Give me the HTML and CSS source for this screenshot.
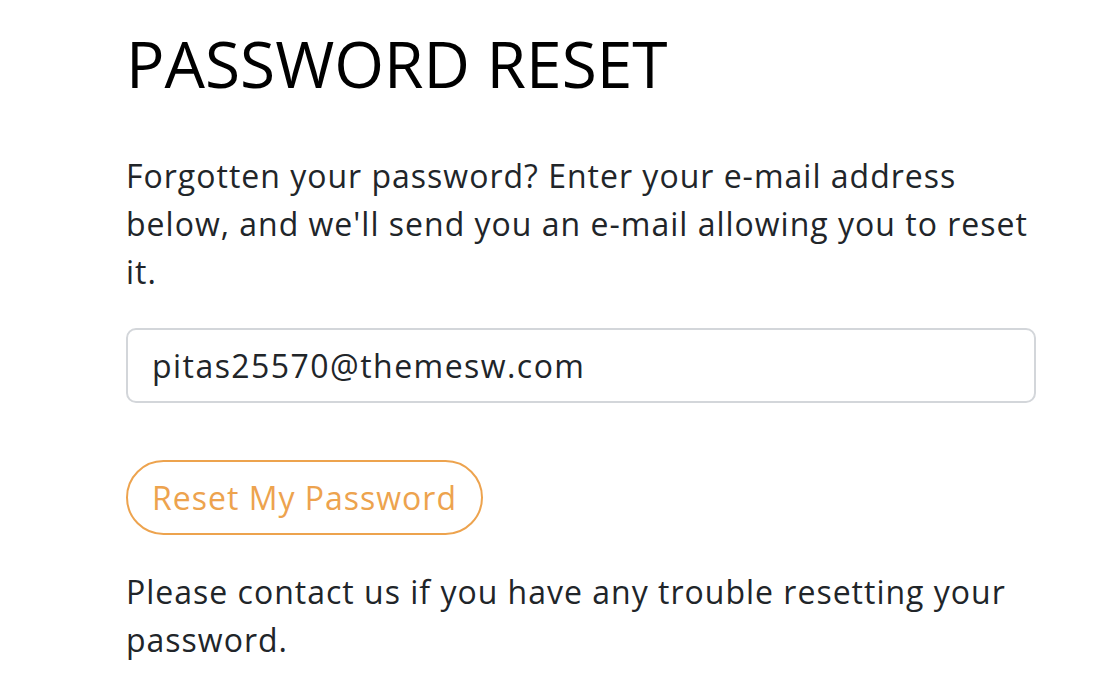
FILE: index.html
```html
<!DOCTYPE html>
<html lang="en">
<head>
<meta charset="utf-8">
<title>Password Reset</title>
<link rel="stylesheet" href="styles.css">
</head>
<body>
<main class="page">
  <h1 class="title">PASSWORD RESET</h1>
  <p class="lead">Forgotten your password? Enter your e-mail address below, and we'll send you an e-mail allowing you to reset it.</p>
  <form class="reset-form" action="#" onsubmit="return false">
    <input class="email-input" type="email" name="email" value="pitas25570@themesw.com" aria-label="E-mail address">
    <button class="reset-btn" type="submit">Reset My Password</button>
  </form>
  <p class="note">Please contact us if you have any trouble resetting your password.</p>
</main>
</body>
</html>
```
FILE: styles.css
```css
html, body {
  margin: 0;
  padding: 0;
  background: #ffffff;
}
body {
  font-family: "Open Sans", "Liberation Sans", sans-serif;
  color: #212529;
}
.page {
  width: 910px;
  padding: 25px 0 0 126px;
}
.title {
  margin: 0;
  font-size: 64px;
  line-height: 77px;
  font-weight: 400;
  color: #000000;
}
.lead,
.note {
  margin: 0;
  font-size: 32px;
  line-height: 48px;
  letter-spacing: 1px;
}
.lead {
  margin-top: 50px;
}
.reset-form {
  display: flex;
  flex-direction: column;
  align-items: flex-start;
  margin-top: 32px;
}
.email-input {
  box-sizing: border-box;
  width: 910px;
  height: 75px;
  padding: 0 24px;
  border: 2px solid #d3d6da;
  border-radius: 10px;
  font-family: inherit;
  font-size: 32px;
  letter-spacing: 1.45px;
  color: #212529;
  background: #ffffff;
  outline: none;
}
.reset-btn {
  box-sizing: border-box;
  height: 75px;
  margin-top: 57px;
  padding: 0 24px;
  border: 2px solid #eda34e;
  border-radius: 38px;
  background: #ffffff;
  font-family: inherit;
  font-size: 32px;
  letter-spacing: 1px;
  color: #eda34e;
  cursor: pointer;
}
.note {
  margin-top: 33px;
}
```
